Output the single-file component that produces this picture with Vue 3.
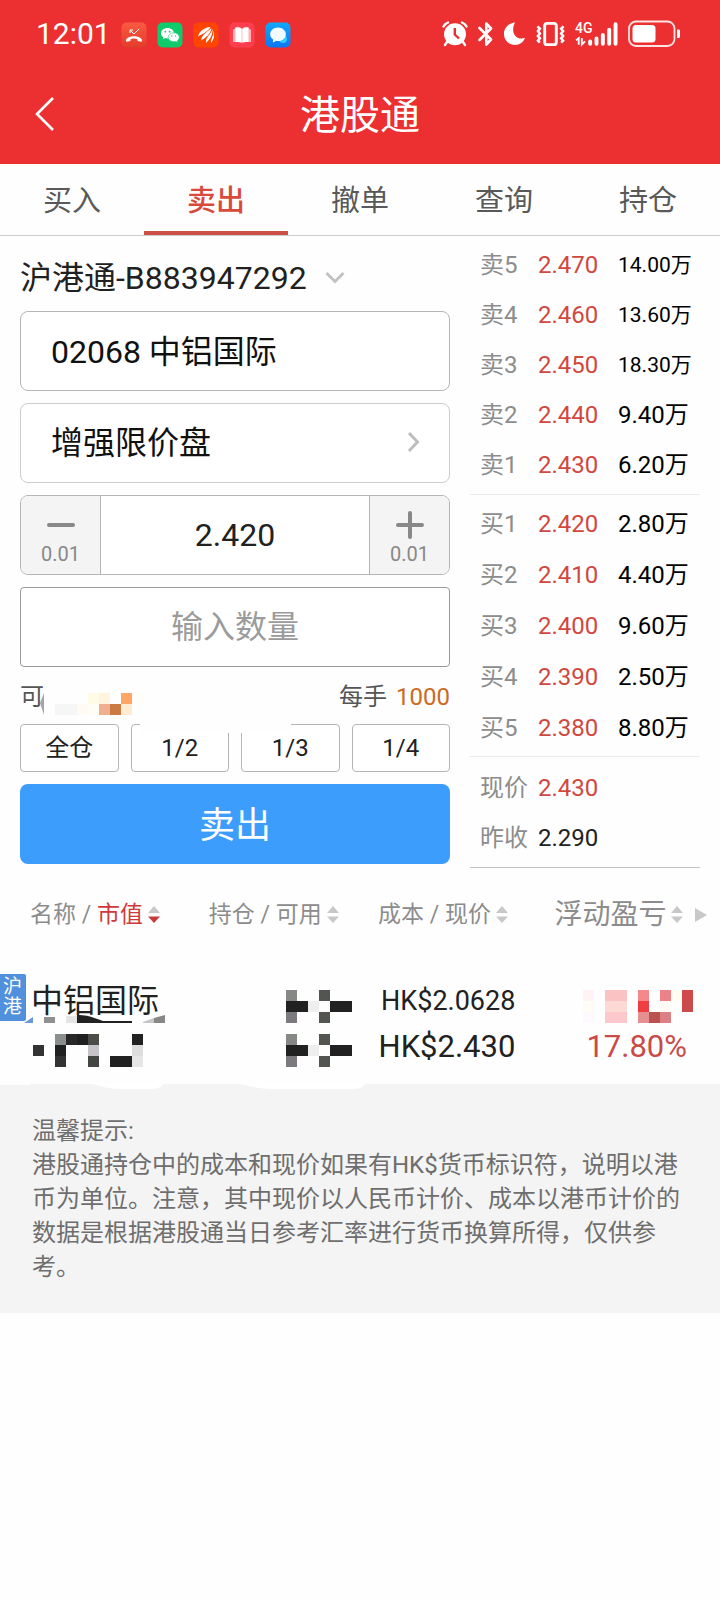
<script setup>
import { ref } from 'vue'

const tabs = ['买入', '卖出', '撤单', '查询', '持仓']
const activeTab = ref('卖出')
const price = ref('2.420')
const stock = ref('02068 中铝国际')
const amount = ref('')

const asks = [
  ['卖5', '2.470', '14.00万'],
  ['卖4', '2.460', '13.60万'],
  ['卖3', '2.450', '18.30万'],
  ['卖2', '2.440', '9.40万'],
  ['卖1', '2.430', '6.20万'],
]
const bids = [
  ['买1', '2.420', '2.80万'],
  ['买2', '2.410', '4.40万'],
  ['买3', '2.400', '9.60万'],
  ['买4', '2.390', '2.50万'],
  ['买5', '2.380', '8.80万'],
]

const step = (delta) => {
  price.value = (Number(price.value) + delta).toFixed(3)
}

// Mosaic cells: column, row, colour, width in columns
const availableCells = [
  [3, 0, '#fffbe6', 1], [4, 0, '#fff5de', 1], [6, 0, '#ffa665', 1], [7, 0, '#fffdf8', 1],
  [0, 1, '#f6f6f6', 2], [2, 1, '#fffaf4', 1], [3, 1, '#fffdf6', 1], [4, 1, '#f0b090', 1],
  [5, 1, '#cb7a41', 1], [6, 1, '#ffecd2', 1],
]
const quantityCells = [
  [0, 0, '#868886', 1], [3, 0, '#535550', 1],
  [0, 1, '#212121', 2], [2, 1, '#eeeeee', 1], [4, 1, '#212121', 2],
  [0, 2, '#7c7a7f', 1], [3, 2, '#535550', 1],
]
const valueCells = [
  [2, 0, '#8b8f8b', 1], [3, 0, '#282828', 1], [4, 0, '#202020', 1], [5, 0, '#4a4c48', 1], [9, 0, '#212121', 1],
  [0, 1, '#333333', 1], [2, 1, '#212121', 1], [5, 1, '#c6c4c8', 1], [9, 1, '#dddddd', 1],
  [2, 2, '#333333', 1], [5, 2, '#444644', 1], [7, 2, '#212121', 2], [9, 2, '#e6e6e6', 1],
]
const profitCells = [
  [0, 0, '#fff3f5', 1], [2, 0, '#fbc2c4', 2], [5, 0, '#f4888a', 1], [7, 0, '#ec8288', 1], [8, 0, '#fffcf4', 1], [9, 0, '#cf4a4a', 1],
  [0, 1, '#fffcf5', 1], [2, 1, '#fdd9d6', 2], [5, 1, '#ee3e42', 1], [7, 1, '#fffaf5', 1], [9, 1, '#c94b4c', 1],
  [0, 2, '#fdf9ff', 1], [2, 2, '#fdc8cb', 2], [5, 2, '#e68f90', 1], [6, 2, '#b9524e', 1], [7, 2, '#dd8086', 1],
]
</script>

<template>
  <div class="page">
    <header class="top">
      <div class="status">
        <span class="time">12:01</span>
        <div class="apps">
          <svg viewBox="0 0 26 26" class="app">
            <defs>
              <linearGradient id="gCall" x1="0" y1="0" x2="0" y2="1"><stop offset="0" stop-color="#fb5a42" /><stop offset="1" stop-color="#e23d2c" /></linearGradient>
            </defs>
            <rect x="0.5" y="0.5" width="25" height="25" rx="5" fill="url(#gCall)" />
            <path d="M9 11V8h3M9 8l4 4 5-5" fill="none" stroke="#fff" stroke-width="1" />
            <path d="M5.2 19.2c-.6-1-.2-2.1 1-2.900C8.300 14.900 10.500 14.300 13 14.300s4.700.6 6.800 2c1.200.8 1.600 1.900 1 2.900l-.5.6-3.600-.9-.5-2c-2.100-.7-4.300-.7-6.400 0l-.5 2-3.600.9z" fill="#fff" />
          </svg>
          <svg viewBox="0 0 26 26" class="app">
            <rect x="0.5" y="0.5" width="25" height="25" rx="5" fill="#0fcb6b" />
            <path d="M10.500 6C6.900 6 4 8.300 4 11.200c0 1.700.9 3.100 2.400 4.100l-.5 2 2.300-1.200c.7.2 1.500.3 2.300.3 3.600 0 6.500-2.300 6.500-5.200S14.100 6 10.500 6z" fill="#fff" />
            <path d="M16.700 10.800c3.200 0 5.600 2 5.600 4.500 0 1.400-.8 2.600-2 3.400l.4 1.700-2-1c-.6.200-1.300.300-2 .300-3.100 0-5.600-2-5.600-4.400s2.500-4.500 5.600-4.500z" fill="#fff" stroke="#0fcb6b" stroke-width=".6" />
            <g fill="#0fcb6b"><circle cx="8.300" cy="9.700" r=".9" /><circle cx="12.600" cy="9.700" r=".9" /><circle cx="14.800" cy="13.900" r=".7" /><circle cx="18.600" cy="13.900" r=".7" /></g>
          </svg>
          <svg viewBox="0 0 26 26" class="app">
            <rect x="0.5" y="0.5" width="25" height="25" rx="5" fill="#ff4500" />
            <g fill="#fff">
              <path d="M17.500 5C12 5.500 6.500 8.500 5 14.500c4-2.500 9-4 12.500-9.500z" />
              <path d="M18.500 6C15 9.500 9 12 8 18.500 13 15.500 17.500 12 18.500 6z" />
              <path d="M19.500 6.500C19 12 12.500 14 13 21c4-3.500 7-8.500 6.500-14.500z" />
              <path d="M20.300 8.500c1.200 4-2.300 7-2.300 12.500 3-3 4-8.500 2.300-12.500z" />
            </g>
          </svg>
          <svg viewBox="0 0 26 26" class="app">
            <rect x="0.5" y="0.5" width="25" height="25" rx="5" fill="#ff3f50" />
            <path d="M4 8l3-2.500 6 1.500 6-1.500L22 8v12H4z" fill="#ffb0b6" />
            <path d="M6.500 5.500C9 5 11.500 5.500 12.600 6.500v14.500C11 20 9 19.800 6.500 20zM19.500 5.500c-2.500-.5-5 0-6.100 1v14.500c1.600-1 3.600-1.200 6.100-1z" fill="#fff" />
          </svg>
          <svg viewBox="0 0 26 26" class="app">
            <defs>
              <linearGradient id="gChat" x1="0" y1="0" x2="0" y2="1"><stop offset="0" stop-color="#12a8fb" /><stop offset="1" stop-color="#0d76f2" /></linearGradient>
            </defs>
            <rect x="0.5" y="0.5" width="25" height="25" rx="5" fill="url(#gChat)" />
            <circle cx="18" cy="17" r="4" fill="#35c8fb" />
            <path d="M13 5.500c4.400 0 7.800 2.900 7.800 6.700S17.400 19 13 19c-.7 0-1.400-.1-2-.2-.8.900-1.900 1.500-3.200 1.500l.4-2.800c-1.900-1.200-3-3.100-3-5.300 0-3.800 3.400-6.700 7.800-6.700z" fill="#f2fbff" />
          </svg>
        </div>
        <div class="system">
          <svg viewBox="0 0 26 26" class="s-alarm">
            <g stroke="#fff" stroke-linecap="round" stroke-width="2.400" fill="none"><path d="M1.500 5.500C2.500 3.500 4 2.300 6 1.500M24.500 5.500C23.500 3.500 22 2.300 20 1.500M5 21l-2 3M21 21l2 3" /></g>
            <circle cx="13" cy="13.300" r="11" fill="#fff" />
            <path d="M12.800 7v6.500l4.200 4" fill="none" stroke="#e92e30" stroke-width="2.400" />
          </svg>
          <svg viewBox="0 0 15 26" class="s-bt">
            <path d="M1.500 7L13 18.500 8.300 23.500V2.500L13 7.500 1.500 19" fill="none" stroke="#fff" stroke-width="2.600" stroke-linejoin="round" stroke-linecap="round" />
          </svg>
          <svg viewBox="0 0 24 26" class="s-moon">
            <path d="M12.500 1C5.500 1.800 1 6.800 1 12.800 1 19.500 6 24.500 12.400 24.500c5 0 9-2.800 10.600-7.500-3.500 1.300-7.500.8-10-2C10 12 9.800 6 12.500 1z" fill="#fff" />
          </svg>
          <svg viewBox="0 0 30 26" class="s-vib">
            <rect x="9" y="2" width="12" height="22" rx="2.500" fill="none" stroke="#fff" stroke-width="3" />
            <path d="M1.500 5l2.500 2.500-2 2.500 2 2.500-2 2.500 2 2.500-2 2.500 2 2M28.500 5L26 7.500l2 2.500-2 2.500 2 2.500-2 2.500 2 2.500-2 2" fill="none" stroke="#fff" stroke-width="2.600" />
          </svg>
          <div class="signal">
            <span class="net">4G</span>
            <svg viewBox="0 0 44 26">
              <g stroke="#fff" stroke-width="4" stroke-linecap="round"><path d="M15.500 20.500V23M22 17.500V23M28.500 14V23M35 8.500V23M41.500 3V23" /></g>
              <path d="M1 19.500l2.800-2.300V24M7 17v6.800l3.200-3.300" fill="none" stroke="#fff" stroke-width="1.900" />
            </svg>
          </div>
          <svg viewBox="0 0 52 28" class="s-batt">
            <rect x="1" y="1.500" width="45.500" height="24.500" rx="7" fill="none" stroke="#ffe4e4" stroke-width="1.800" />
            <rect x="4.500" y="5" width="23" height="17.500" rx="3.500" fill="#fff" />
            <path d="M49 9.500h1.500c1 0 1.500.6 1.500 1.500v5.500c0 .9-.5 1.500-1.500 1.500H49z" fill="#fff" />
          </svg>
        </div>
      </div>
      <div class="nav">
        <button class="back" aria-label="返回">
          <svg viewBox="0 0 22 36"><path d="M19 2L3 18l16 16" fill="none" stroke="#fff" stroke-width="2.600" /></svg>
        </button>
        <h1>港股通</h1>
      </div>
    </header>

    <nav class="tabs">
      <button v-for="t in tabs" :key="t" :class="{ on: t === activeTab }" @click="activeTab = t">{{ t }}</button>
    </nav>

    <main class="trade">
      <form class="form" @submit.prevent>
        <div class="account">
          <select aria-label="股东账户"><option>沪港通-B883947292</option></select>
          <svg viewBox="0 0 20 14"><path d="M1.500 2L10 10.500 18.500 2" fill="none" stroke="#c2c2c2" stroke-width="3" /></svg>
        </div>
        <input v-model="stock" class="field code" aria-label="证券代码" />
        <div class="kind">
          <select class="field light" aria-label="委托类型"><option>增强限价盘</option></select>
          <svg viewBox="0 0 14 22"><path d="M2 2l8.500 9L2 20" fill="none" stroke="#bdbdbd" stroke-width="3" /></svg>
        </div>
        <div class="stepper">
          <button type="button" aria-label="减 0.01" @click="step(-0.01)">
            <svg viewBox="0 0 28 28"><path d="M2 14h24" stroke="#888" stroke-width="4" stroke-linecap="round" /></svg>
            <span>0.01</span>
          </button>
          <input v-model="price" aria-label="价格" />
          <button type="button" aria-label="加 0.01" @click="step(0.01)">
            <svg viewBox="0 0 28 28"><path d="M2 14h24M14 2v24" stroke="#888" stroke-width="4" stroke-linecap="round" /></svg>
            <span>0.01</span>
          </button>
        </div>
        <input v-model="amount" class="field amount" placeholder="输入数量" aria-label="数量" />
        <div class="info">
          <span class="avail">可<svg class="wedge" viewBox="0 0 4 22"><path d="M4 0v22L0 10z" fill="#a5a5a5" /></svg></span>
          <svg class="mosaic" width="88" height="22" shape-rendering="crispEdges">
            <rect v-for="(c, i) in availableCells" :key="i" :x="c[0] * 11" :y="c[1] * 11" :width="c[3] * 11" height="11" :fill="c[2]" />
          </svg>
          <span class="lot">每手<b>1000</b></span>
        </div>
        <div class="quick">
          <button type="button">全仓</button>
          <button type="button">1/2</button>
          <button type="button">1/3</button>
          <button type="button">1/4</button>
        </div>
        <button class="sell">卖出</button>
      </form>

      <aside class="book">
        <table class="asks">
          <tbody>
            <tr v-for="r in asks" :key="r[0]">
              <th scope="row">{{ r[0] }}</th><td class="red">{{ r[1] }}</td><td :class="{ long: r[2].length > 5 }">{{ r[2] }}</td>
            </tr>
          </tbody>
        </table>
        <table class="bids">
          <tbody>
            <tr v-for="r in bids" :key="r[0]">
              <th scope="row">{{ r[0] }}</th><td class="red">{{ r[1] }}</td><td>{{ r[2] }}</td>
            </tr>
          </tbody>
        </table>
        <table class="last">
          <tbody>
            <tr><th scope="row">现价</th><td class="red">2.430</td><td></td></tr>
            <tr><th scope="row">昨收</th><td class="dark">2.290</td><td></td></tr>
          </tbody>
        </table>
      </aside>
    </main>

    <table class="holdings">
      <colgroup><col class="c1" /><col class="c2" /><col class="c3" /><col class="c4" /></colgroup>
      <thead>
        <tr>
          <th scope="col"><div class="h first">名称 / <em>市值</em><svg viewBox="0 0 12 18"><path d="M0 7L6 0l6 7z" fill="#c8c8c8" /><path d="M0 10.500h12l-6 6.500z" fill="#c63c3c" /></svg></div></th>
          <th scope="col"><div class="h">持仓 / 可用<svg viewBox="0 0 12 18"><path d="M0 7L6 0l6 7zM0 10.500h12l-6 6.500z" fill="#c8c8c8" /></svg></div></th>
          <th scope="col"><div class="h">成本 / 现价<svg viewBox="0 0 12 18"><path d="M0 7L6 0l6 7zM0 10.500h12l-6 6.500z" fill="#c8c8c8" /></svg></div></th>
          <th scope="col"><div class="h big">浮动盈亏<svg viewBox="0 0 12 18"><path d="M0 7L6 0l6 7zM0 10.500h12l-6 6.500z" fill="#c8c8c8" /></svg><svg class="more" viewBox="0 0 12 14"><path d="M0 0l12 7-12 7z" fill="#c8c8c8" /></svg></div></th>
        </tr>
      </thead>
      <tbody>
        <tr>
          <td class="name">
            <span class="badge">沪<br />港</span>
            <div class="stock">中铝国际</div>
            <svg class="smear" width="141" height="8" viewBox="0 0 141 8">
              <path d="M0 8l9-6v6z" fill="#6a9ad5" /><path d="M20 2h11v6H20z" fill="#909090" /><path d="M42 1h11v7H42z" fill="#e5e5e5" />
              <path d="M53 0c12 0 17 3 26 6h29v2H53z" fill="#212121" /><path d="M119 7l11-4v5h-11z" fill="#c6c4c8" /><path d="M130 3l11-3v8h-11z" fill="#868886" />
            </svg>
            <svg class="value" width="110" height="33" shape-rendering="crispEdges">
              <rect v-for="(c, i) in valueCells" :key="i" :x="c[0] * 11" :y="c[1] * 11" :width="c[3] * 11" height="11" :fill="c[2]" />
            </svg>
          </td>
          <td class="qty">
            <svg v-for="n in 2" :key="n" width="66" height="33" shape-rendering="crispEdges">
              <rect v-for="(c, i) in quantityCells" :key="i" :x="c[0] * 11" :y="c[1] * 11" :width="c[3] * 11" height="11" :fill="c[2]" />
            </svg>
          </td>
          <td class="cost"><div class="a">HK$2.0628</div><div class="b">HK$2.430</div></td>
          <td class="pnl">
            <svg width="110" height="33" shape-rendering="crispEdges">
              <rect v-for="(c, i) in profitCells" :key="i" :x="c[0] * 11" :y="c[1] * 11" :width="c[3] * 11" height="11" :fill="c[2]" />
            </svg>
            <div class="b">17.80%</div>
          </td>
        </tr>
      </tbody>
    </table>

    <section class="tip">
      <svg class="edge" width="366" height="6" viewBox="0 0 366 6">
        <path d="M0 0h30v1H0zM90 0c12 1 14 5 30 5h32c8 0 8-3 12-5zM237 0c14 1 18 5 36 5h82c6 0 7-3 11-5z" fill="#fff" />
      </svg>
      <h2>温馨提示:</h2>
      <p>港股通持仓中的成本和现价如果有HK$货币标识符，说明以港币为单位。注意，其中现价以人民币计价、成本以港币计价的数据是根据港股通当日参考汇率进行货币换算所得，仅供参考。</p>
    </section>
  </div>
</template>

<style>
body {
  background: #fefefe;
}
</style>

<style scoped>
.page,
.page button,
.page input,
.page select {
  font-family: Roboto, "Noto Sans CJK SC", sans-serif;
}
.page * {
  box-sizing: border-box;
}
.page {
  color: #212121;
  font-size: 24px;
}
svg {
  display: block;
  flex: none;
}
button,
input,
select {
  margin: 0;
  padding: 0;
  border: 0;
  background: none;
  color: inherit;
  font-size: inherit;
  appearance: none;
  border-radius: 0;
}
button {
  cursor: pointer;
}
.top {
  background: #ec2f31;
  color: #fff;
  padding-bottom: 16px;
}
.status {
  display: flex;
  align-items: center;
  height: 68px;
  padding: 0 40px 0 36px;
}
.time {
  font-size: 30px;
  line-height: 34px;
  flex: none;
}
.apps {
  display: flex;
  gap: 10px;
  margin-left: 10px;
  padding-top: 2px;
}
.app {
  width: 26px;
  height: 26px;
}
.system {
  display: flex;
  align-items: center;
  gap: 10px;
  margin-left: auto;
}
.s-alarm {
  width: 26px;
  height: 26px;
}
.s-bt {
  width: 15px;
  height: 26px;
}
.s-moon {
  width: 23px;
  height: 26px;
}
.s-vib {
  width: 29px;
  height: 26px;
}
.signal {
  position: relative;
}
.signal svg {
  width: 43px;
  height: 26px;
}
.net {
  position: absolute;
  left: 0;
  top: 0;
  font-size: 14px;
  line-height: 14px;
  font-weight: 500;
}
.s-batt {
  width: 52px;
  height: 28px;
}
.nav {
  position: relative;
  display: flex;
  align-items: center;
  justify-content: center;
  height: 80px;
  padding-top: 16px;
}
.back {
  position: absolute;
  left: 34px;
  top: 28px;
}
.back svg {
  width: 22px;
  height: 36px;
}
h1 {
  margin: 0;
  font-size: 40px;
  line-height: 52px;
  font-weight: 400;
}
.tabs {
  display: grid;
  grid-template-columns: repeat(5, 1fr);
  height: 72px;
  border-bottom: 1px solid #ccc;
}
.tabs button {
  padding-top: 6px;
  font-size: 29px;
  line-height: 44px;
  color: #595959;
  border-bottom: 4px solid transparent;
}
.tabs .on {
  color: #d94a3c;
  font-weight: 500;
  border-bottom-color: #cc5045;
}
.trade {
  display: flex;
  gap: 20px;
  padding: 0 20px;
}
.form {
  flex: 430;
  min-width: 0;
  display: flex;
  flex-direction: column;
  gap: 12px;
}
.account {
  display: flex;
  align-items: center;
  gap: 18px;
  height: 63px;
  padding-top: 21px;
}
.account select {
  font-size: 32px;
  line-height: 44px;
  height: 44px;
}
.account svg {
  width: 20px;
  height: 14px;
}
.field {
  display: block;
  width: 100%;
  height: 80px;
  padding: 0 30px;
  border: 1px solid #b5b5b5;
  border-radius: 8px;
  background: #fff;
  font-size: 32px;
  color: #111;
}
.code {
  padding-bottom: 4px;
}
.light {
  border-color: #ccc;
}
.kind {
  position: relative;
}
.kind svg {
  position: absolute;
  right: 29px;
  top: 28px;
  width: 14px;
  height: 22px;
  pointer-events: none;
}
.stepper {
  display: flex;
  height: 80px;
  border: 1px solid #b5b5b5;
  border-radius: 8px;
  overflow: hidden;
  background: #fff;
}
.stepper button {
  width: 79px;
  flex: none;
  display: flex;
  flex-direction: column;
  align-items: center;
  padding-top: 15px;
  background: #f4f4f4;
  color: #888;
  font-size: 20px;
  line-height: 30px;
}
.stepper svg {
  width: 28px;
  height: 28px;
}
.stepper input {
  flex: 1;
  min-width: 0;
  text-align: center;
  font-size: 32px;
  border: solid #b5b5b5;
  border-width: 0 1px;
}
.amount {
  text-align: center;
  border-color: #999;
  border-radius: 4px;
}
.amount::placeholder {
  color: #9b9b9b;
  opacity: 1;
}
.info {
  display: flex;
  height: 33px;
  line-height: 36px;
  color: #555;
}
.avail {
  position: relative;
}
.wedge {
  position: absolute;
  left: 20px;
  top: 14px;
  width: 4px;
  height: 22px;
}
.mosaic {
  margin: 14px 0 0 11px;
}
.lot {
  margin-left: auto;
}
.lot b {
  margin-left: 9px;
  font-weight: 400;
  color: #cc6a1e;
}
.quick {
  position: relative;
  display: grid;
  grid-template-columns: repeat(4, 1fr);
  gap: 12px;
}
.quick button {
  height: 48px;
  line-height: 34px;
  border: 1px solid #b5b5b5;
  border-radius: 4px;
  background: #fff;
}
.quick::after {
  content: "";
  position: absolute;
  left: 28%;
  width: 35%;
  top: -8px;
  height: 17px;
  background: #fefefe;
}
.sell {
  height: 80px;
  padding-top: 4px;
  line-height: 52px;
  border-radius: 8px;
  background: #3d9dfd;
  color: #fff;
  font-size: 36px;
}
.book {
  flex: 230;
  min-width: 0;
  padding-top: 4px;
}
table {
  border-collapse: separate;
  border-spacing: 0;
  width: 100%;
  table-layout: fixed;
}
.book table {
  border-bottom: 1px solid #ebebeb;
}
.book th {
  width: 68px;
  padding: 0 0 0 10px;
  text-align: left;
  font-weight: 400;
  line-height: 34px;
  color: #8c8c8c;
  white-space: nowrap;
}
.book td {
  padding: 0;
  height: 50px;
  line-height: 34px;
  color: #000;
  white-space: nowrap;
}
.book td:nth-child(2) {
  width: 80px;
}
.book .red {
  color: #d0483e;
}
.book .dark {
  color: #212121;
}
.book .long {
  font-size: 21px;
}
.book .asks {
  padding-bottom: 4px;
}
.book .bids {
  padding: 3px 0 3px;
}
.book .bids td {
  height: 51px;
}
.book .last {
  padding: 6px 0 4px;
  border-color: #c4c4c4;
}
.c1 {
  width: 29%;
}
.c2 {
  width: 23.5%;
}
.c3 {
  width: 24.5%;
}
.c4 {
  width: 23%;
}
.holdings th {
  height: 94px;
  padding: 0;
  font-weight: 400;
  font-size: 23px;
  color: #8c8c8c;
}
.h {
  display: flex;
  align-items: center;
  white-space: pre;
  line-height: 34px;
}
.first {
  padding-left: 30px;
}
.h em {
  font-style: normal;
  color: #d0393b;
}
.h svg {
  width: 12px;
  height: 18px;
  margin-left: 5px;
}
.big {
  font-size: 28px;
}
.h .more {
  width: 12px;
  height: 14px;
  margin-left: 12px;
}
.holdings td {
  position: relative;
  height: 122px;
  padding: 0;
  vertical-align: top;
}
.badge {
  position: absolute;
  left: 0;
  top: 12px;
  width: 26px;
  height: 47px;
  padding: 3px 0 0 3px;
  background: #5190dc;
  border-radius: 0 2px 2px 0;
  color: #fff;
  font-size: 19px;
  line-height: 20px;
}
.stock {
  padding: 17px 0 0 31px;
  font-size: 32px;
  line-height: 44px;
}
.smear {
  position: absolute;
  left: 24px;
  top: 53px;
}
.holdings .value {
  margin: 11px 0 0 33px;
}
.holdings .qty {
  padding: 28px 26px 0 0;
}
.qty svg {
  margin: 0 0 11px auto;
}
.holdings .cost {
  padding: 16px 39px 0 0;
  text-align: right;
}
.a {
  font-size: 27px;
  line-height: 46px;
}
.b {
  font-size: 31px;
  line-height: 46px;
}
.holdings .pnl {
  padding: 28px 27px 0 0;
}
.pnl svg {
  margin-left: auto;
}
.pnl .b {
  text-align: right;
  padding: 1px 6px 0 0;
  color: #c94a48;
}
.tip {
  position: relative;
  padding: 30px 32px 29px;
  background: #f4f4f4;
  color: #6e6e6e;
}
.edge {
  position: absolute;
  left: 0;
  top: 0;
}
.tip h2,
.tip p {
  margin: 0;
  font-size: 24px;
  line-height: 34px;
  font-weight: 400;
}
</style>
